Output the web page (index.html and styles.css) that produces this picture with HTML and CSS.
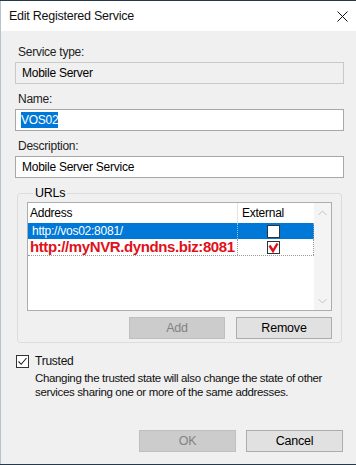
FILE: index.html
```html
<!DOCTYPE html>
<html lang="en">
<head>
    <meta charset="UTF-8">
    <title>Edit Registered Service</title>
    <link rel="stylesheet" href="styles.css">
</head>
<body>
    <div class="dialog">
        <div class="titlebar">
            <span class="title">Edit Registered Service</span>
            <svg class="close" width="11" height="11" viewBox="0 0 11 11">
                <path d="M0.5 0.5 L10.5 10.5 M10.5 0.5 L0.5 10.5" stroke="#111" stroke-width="1" fill="none"/>
            </svg>
        </div>

        <div class="content">
            <div class="field">
                <label>Service type:</label>
                <div class="textbox readonly">Mobile Server</div>
            </div>

            <div class="field">
                <label>Name:</label>
                <div class="textbox"><span class="selected-text">VOS02</span></div>
            </div>

            <div class="field">
                <label>Description:</label>
                <div class="textbox">Mobile Server Service</div>
            </div>

            <fieldset class="group">
                <legend>URLs</legend>
                <div class="listview">
                    <div class="list-body">
                        <div class="list-header">
                            <div class="col-address">Address</div>
                            <div class="col-external">External</div>
                        </div>
                        <div class="list-row selected">
                            <div class="col-address">http://vos02:8081/</div>
                            <div class="col-external"><span class="check"></span></div>
                        </div>
                        <div class="list-row focused">
                            <div class="col-address annotated">http://myNVR.dyndns.biz:8081</div>
                            <div class="col-external">
                                <span class="check">
                                    <svg width="11" height="11" viewBox="0 0 11 11">
                                        <path d="M1.5 3.5 L5 9 L9.5 1.5" stroke="#e0101a" stroke-width="2.4" fill="none"/>
                                    </svg>
                                </span>
                            </div>
                        </div>
                    </div>
                    <div class="scrollbar">
                        <svg width="9" height="6" viewBox="0 0 9 6"><path d="M0.5 5 L4.5 1 L8.5 5" stroke="#c2c2c2" fill="none"/></svg>
                        <svg width="9" height="6" viewBox="0 0 9 6"><path d="M0.5 1 L4.5 5 L8.5 1" stroke="#c2c2c2" fill="none"/></svg>
                    </div>
                </div>
                <div class="button-row">
                    <button class="btn" disabled>Add</button>
                    <button class="btn">Remove</button>
                </div>
            </fieldset>

            <div class="trusted">
                <span class="checkbox">
                    <svg width="11" height="11" viewBox="0 0 11 11">
                        <path d="M1.5 5.5 L4.2 8.3 L9.5 2" stroke="#222" stroke-width="1.1" fill="none"/>
                    </svg>
                </span>
                <div class="trusted-text">
                    <div>Trusted</div>
                    <p>Changing the trusted state will also change the state of other services sharing one or more of the same addresses.</p>
                </div>
            </div>

            <div class="dialog-buttons">
                <button class="btn wide" disabled>OK</button>
                <button class="btn wide">Cancel</button>
            </div>
        </div>
    </div>
</body>
</html>
```

FILE: styles.css
```css
* {
    margin: 0;
    padding: 0;
    box-sizing: border-box;
}

body {
    background: #26394b;
    font-family: "Liberation Sans", Arial, sans-serif;
    font-size: 12px;
    letter-spacing: -0.25px;
    color: #000;
}

.dialog {
    width: 356px;
    height: 463px;
    margin-top: 1px;
    background: #f0f0f0;
    border-left: 1px solid #b9c2ca;
    display: flex;
    flex-direction: column;
}

.titlebar {
    height: 30px;
    background: #ffffff;
    display: flex;
    align-items: center;
    justify-content: space-between;
    padding: 0 8px 0 8px;
}

.title {
    font-size: 12.5px;
    color: #111;
}

.content {
    flex: 1;
    padding: 14px 12px 0 14px;
    display: flex;
    flex-direction: column;
}

.field {
    margin-bottom: 8px;
}

label {
    display: block;
    height: 15px;
    line-height: 15px;
    margin-bottom: 2px;
    padding-left: 3px;
    color: #222;
}

.textbox {
    height: 22px;
    line-height: 20px;
    border: 1px solid #a8a8a8;
    background: #ffffff;
    padding-left: 6px;
}

.textbox.readonly {
    background: #f0f0f0;
    border-color: #c9c9c9;
}

.selected-text {
    background: #0078d7;
    color: #ffffff;
    padding: 1px 0 1px 0;
    margin-left: -1px;
}

.group {
    border: 1px solid #dcdcdc;
    border-radius: 3px;
    margin: 0 2px 0 2px;
    padding: 1px 9px 3px 9px;
}

.group legend {
    margin-left: 6px;
    padding: 0 2px;
    line-height: 15px;
    font-size: 12.5px;
}

.listview {
    height: 109px;
    border: 1px solid #adadad;
    background: #ffffff;
    display: flex;
}

.list-body {
    flex: 1;
}

.list-header,
.list-row {
    display: flex;
}

.list-header {
    height: 20px;
    line-height: 20px;
}

.list-header .col-address {
    border-right: 1px solid #e5e5e5;
}

.col-address {
    width: 210px;
    padding-left: 2px;
    white-space: nowrap;
}

.col-external {
    flex: 1;
    padding-left: 4px;
}

.list-row {
    height: 16px;
    line-height: 16px;
}

.list-row .col-address {
    border-right: 1px dotted #9a9a9a;
}

.list-row .col-external {
    border-right: 1px dotted #9a9a9a;
    display: flex;
    align-items: center;
    padding-left: 29px;
}

.list-row.selected {
    background: #0078d7;
    color: #ffffff;
}

.list-row.selected .col-address {
    padding-left: 4px;
    border-right-color: #9cc6ec;
}

.list-row.focused {
    height: 17px;
    border-bottom: 1px dotted #9a9a9a;
}

.annotated {
    color: #e0101a;
    font-weight: bold;
    font-size: 15px;
    letter-spacing: -0.4px;
}

.check {
    width: 13px;
    height: 13px;
    border: 1px solid #333;
    background: #ffffff;
    display: flex;
    align-items: center;
    justify-content: center;
}

.scrollbar {
    width: 17px;
    background: #f4f4f4;
    display: flex;
    flex-direction: column;
    justify-content: space-between;
    align-items: center;
    padding: 7px 0 6px 0;
}

.button-row {
    display: flex;
    justify-content: flex-end;
    gap: 11px;
    margin-top: 6px;
}

.btn {
    width: 96px;
    height: 22px;
    font-family: "Liberation Sans", Arial, sans-serif;
    font-size: 12.5px;
    letter-spacing: -0.2px;
    background: #e1e1e1;
    border: 1px solid #adadad;
    color: #000;
}

.btn:disabled {
    background: #cccccc;
    border-color: #bfbfbf;
    color: #838383;
}

.btn.wide {
    width: 97px;
}

.trusted {
    display: flex;
    margin-top: 12px;
    padding-left: 1px;
}

.checkbox {
    width: 13px;
    height: 13px;
    border: 1px solid #333;
    background: #ffffff;
    display: flex;
    align-items: center;
    justify-content: center;
    margin-right: 6px;
    flex-shrink: 0;
}

.trusted-text {
    line-height: 14px;
    margin-top: -1px;
    color: #111;
}

.trusted-text p {
    margin-top: 3px;
    width: 310px;
    font-size: 11.5px;
    letter-spacing: -0.35px;
}

.dialog-buttons {
    display: flex;
    justify-content: flex-end;
    gap: 10px;
    margin-top: auto;
    margin-bottom: 12px;
    padding-right: 1px;
}
```
